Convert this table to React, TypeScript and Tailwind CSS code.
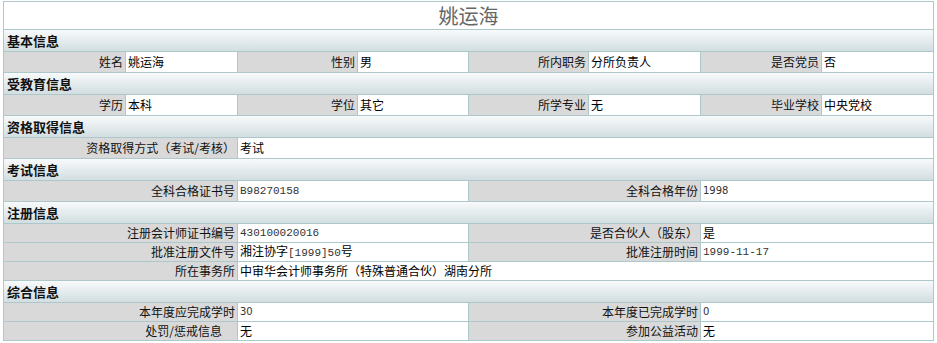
import React from "react";

type Cell = {
  label: string;
  value: React.ReactNode;
  span: "q" | "h" | "w";
  mono?: boolean;
  num?: boolean;
  gap?: boolean;
};

interface Section {
  title: string;
  rows: Cell[][];
  short?: boolean;
}

const Mono = ({ children }: { children: React.ReactNode }) => (
  <span className="font-['Liberation_Mono',monospace] text-[11px] text-[#333]">{children}</span>
);

const sections: Section[] = [
  {
    title: "基本信息",
    rows: [
      [
        { label: "姓名", value: "姚运海", span: "q" },
        { label: "性别", value: "男", span: "q" },
        { label: "所内职务", value: "分所负责人", span: "q" },
        { label: "是否党员", value: "否", span: "q" },
      ],
    ],
  },
  {
    title: "受教育信息",
    rows: [
      [
        { label: "学历", value: "本科", span: "q" },
        { label: "学位", value: "其它", span: "q" },
        { label: "所学专业", value: "无", span: "q" },
        { label: "毕业学校", value: "中央党校", span: "q" },
      ],
    ],
  },
  {
    title: "资格取得信息",
    rows: [[{ label: "资格取得方式（考试/考核）", value: "考试", span: "w" }]],
  },
  {
    title: "考试信息",
    rows: [
      [
        { label: "全科合格证书号", value: "B98270158", span: "h", mono: true },
        { label: "全科合格年份", value: "1998", span: "h", num: true },
      ],
    ],
  },
  {
    title: "注册信息",
    short: true,
    rows: [
      [
        { label: "注册会计师证书编号", value: "430100020016", span: "h", mono: true },
        { label: "是否合伙人（股东）", value: "是", span: "h" },
      ],
      [
        {
          label: "批准注册文件号",
          value: (
            <>
              湘注协字<Mono>[1999]50</Mono>号
            </>
          ),
          span: "h",
        },
        { label: "批准注册时间", value: "1999-11-17", span: "h", mono: true },
      ],
      [{ label: "所在事务所", value: "中审华会计师事务所（特殊普通合伙）湖南分所", span: "w" }],
    ],
  },
  {
    title: "综合信息",
    short: true,
    rows: [
      [
        { label: "本年度应完成学时", value: "30", span: "h", num: true },
        { label: "本年度已完成学时", value: "0", span: "h", num: true },
      ],
      [
        { label: "处罚/惩戒信息", value: "无", span: "h", gap: true },
        { label: "参加公益活动", value: "无", span: "h" },
      ],
    ],
  },
];

const labelSpan = { q: "col-span-1", h: "col-span-2", w: "col-span-2" };
const valueSpan = { q: "col-span-1", h: "col-span-2", w: "col-span-6" };

function Pair({ cell, short }: { cell: Cell; short?: boolean }) {
  const h = short ? "h-[18px]" : "h-[20px]";
  const valueFont = cell.mono
    ? "font-['Liberation_Mono',monospace] text-[11px] text-[#333]"
    : cell.num
    ? "font-['DejaVu_Sans',sans-serif] text-[10px] text-[#333]"
    : "text-[12px] text-black";
  return (
    <>
      <div
        className={`${labelSpan[cell.span]} ${h} ${cell.gap ? "pr-[15px]" : "pr-[2px]"} bg-[#d9d9d9] flex items-center justify-end text-[12px] text-[#111] whitespace-nowrap`}
      >
        {cell.label}
      </div>
      <div
        className={`${valueSpan[cell.span]} ${h} bg-white flex items-center pl-[2px] whitespace-nowrap ${valueFont}`}
      >
        <span>{cell.value}</span>
      </div>
    </>
  );
}

export default function App() {
  return (
    <div className="w-[937px] h-[343px] bg-white pt-px pl-[3px] font-['Noto_Sans_CJK_SC',sans-serif] leading-none">
      <div className="w-[931px] bg-[#adc7cb] p-px grid grid-cols-[121px_111px_119px_110px_119px_111px_120px_111px] gap-px">
        {/* Title */}
        <div className="col-span-8 h-[27px] bg-white flex items-center justify-center text-[20px] text-[#666]">
          姚运海
        </div>

        {sections.map((s) => (
          <React.Fragment key={s.title}>
            <div className="col-span-8 h-[21px] bg-gradient-to-b from-[#f8fafb] to-[#d2dee1] flex items-center pl-[3px] text-[13px] font-bold text-[#111]">
              {s.title}
            </div>
            {s.rows.map((row, i) => (
              <React.Fragment key={i}>
                {row.map((c) => (
                  <Pair key={c.label} cell={c} short={s.short} />
                ))}
              </React.Fragment>
            ))}
          </React.Fragment>
        ))}
      </div>
    </div>
  );
}
